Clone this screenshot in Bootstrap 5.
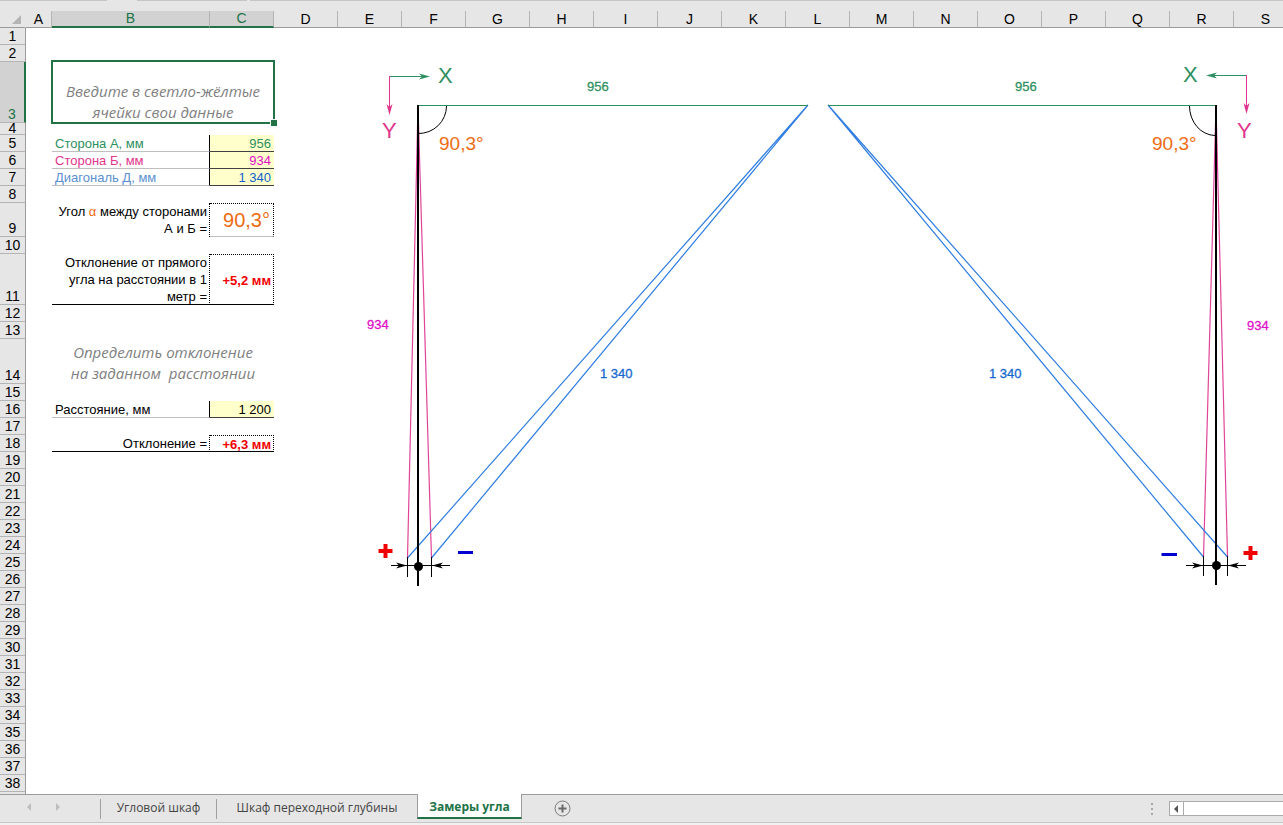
<!DOCTYPE html>
<html lang="ru">
<head>
<meta charset="utf-8">
<meta name="viewport" content="width=device-width, initial-scale=1">
<title>Замеры угла</title>
<link href="https://cdn.jsdelivr.net/npm/bootstrap@5.3.0/dist/css/bootstrap.min.css" rel="stylesheet">
<style>
  :root { --chrome: #e6e6e6; --rule: #9b9b9b; --accent: #217346; --entry: #ffffcc; }
  body { font-family: "Liberation Sans", Arial, sans-serif; font-size: 13px; line-height: 17px; color: #000; background: #fff; }
  .top-strip { height: 11px; gap: 3px; background: var(--chrome); }
  .top-strip span { height: 1px; background: #c6c6c6; }
  .top-strip .seg { width: 107px; margin-right: 27px; }
  .top-strip .seg + .seg { width: 110px; margin-right: 0; }

  /* cell grid */
  .sheet-area { min-height: 0; }
  .cells { table-layout: fixed; border-collapse: separate; border-spacing: 0; width: 1298px; }
  .cells col { width: 64px; }
  .cells col.narrow { width: 26px; }
  .cells col.wide { width: 158px; }
  .cells td, .cells th { padding: 0; height: 17px; font-weight: 400; vertical-align: bottom; }
  .cells thead th { background: var(--chrome); text-align: center; font-size: 14px; line-height: 16px; border-bottom: 1px solid var(--rule); border-right: 1px solid #b4b4b4; }
  .cells thead th.corner { text-align: right; padding-right: 4px; border-right-color: var(--chrome); }
  .cells tbody th { background: var(--chrome); text-align: center; font-size: 14px; line-height: 16px; border-bottom: 1px solid #b4b4b4; border-right: 1px solid var(--rule); }
  .cells thead th.picked { background: #d2d2d2; color: var(--accent); border-bottom: 2px solid var(--accent); line-height: 15px; }
  .cells tbody th.picked { background: #d2d2d2; color: var(--accent); border-right: 2px solid var(--accent); }
  .corner svg { display: block; margin-left: auto; margin-bottom: 3px; }
  .cells tr.r3 > * { height: 61px; }
  .cells tr.r4 > * { height: 12px; line-height: 11px; }
  .cells tr.r9 > * { height: 34px; }
  .cells tr.r11 > * { height: 51px; }
  .cells tr.r14 > * { height: 45px; }

  .hint { font-family: "Open Sans", sans-serif; font-style: italic; font-size: 15px; line-height: 21px; color: #808080; text-align: center; }
  .selection::after { content: ""; position: absolute; inset: -2px -1px -1px; border: 2px solid var(--accent); }
  .grip { position: absolute; z-index: 1; right: -3px; bottom: -3px; width: 7px; height: 7px; background: var(--accent); border: solid #fff; border-width: 1px 0 0 1px; }
  .cells .caption-cell { padding-left: 3px; border-bottom: 1px solid #bfbfbf; border-right: 1px solid #000; }
  .caption-cell label, .entry input { display: block; height: 16px; line-height: 17px; }
  .cells .entry { background: var(--entry); border-bottom: 1px solid #404040; }
  .entry input { width: 100%; border: 0; padding: 0 3px 0 0; background: transparent; color: inherit; text-align: right; }
  .cells .ask { text-align: right; padding-right: 2px; border-right: 1px dotted #000; }
  .cells .answer { text-align: right; vertical-align: middle; line-height: 15px; border: 1px dotted #000; border-width: 1px 1px 0 0; padding-right: 2px; color: #f00000; font-weight: 700; }
  .cells .answer.angle { font-size: 20px; line-height: 24px; font-weight: 400; color: #ed6c12; padding-right: 3px; border-bottom: 1px solid #bfbfbf; }
  .cells .solid-end { box-shadow: inset 0 -1px #000; }
  .tone-a { color: #2e8f61; } .tone-b { color: #e0358c; } .tone-d { color: #5b8fcf; }
  .tone-b2 { color: #e010c8; } .tone-d2 { color: #1062cc; } .tone-angle { color: #ed6c12; }

  /* drawing floats over the cells */
  .sketch { position: absolute; left: 338px; top: 45px; width: 945px; height: 560px; }
  .sketch text { font-size: 13px; }
  .sketch .axis { font-size: 22px; }
  .sketch .deg { font-size: 19px; }
  .sketch .val { stroke-width: .3px; }

  /* sheet tabs */
  .tabs-bar { height: 29px; background: var(--chrome); border-top: 1px solid var(--rule); border-bottom: 1px solid #c6c6c6; font-family: "Open Sans", sans-serif; font-size: 12px; }
  .tabs-bar a { color: #444; text-decoration: none; text-align: center; }
  .tabs-bar .tab { border-left: 1px solid #a0a0a0; height: 20px; line-height: 18px; }
  .tabs-bar .tab-1 { width: 116px; } .tabs-bar .tab-2 { width: 201px; }
  .tabs-bar .tab-now { width: 105px; height: 25px; line-height: 25px; margin-top: -1px; color: var(--accent); font-weight: 700; background: #fff; border: solid var(--rule); border-width: 0 1px; border-bottom: 2px solid var(--accent); }
  .tabs-bar button { border: 0; padding: 0; background: none; display: flex; }
  .arrows { width: 100px; padding-left: 27px; gap: 24px; }
  .hscroll { width: 114px; height: 15px; border: 1px solid #ababab; border-right: 0; background: #fff; }
  .hscroll button { width: 14px; border-right: 1px solid #ababab; align-items: center; justify-content: center; }
  .foot { height: 2px; background: #f1f1f1; }
</style>
</head>
<body class="vh-100 d-flex flex-column overflow-hidden">
<main class="sheet-area position-relative flex-fill overflow-hidden">
  <div class="top-strip d-flex"><span class="seg"></span><span class="seg"></span><span class="flex-fill"></span></div>
  <table class="cells">
    <colgroup id="widths"><col class="narrow"><col class="narrow"><col class="wide"></colgroup>
    <thead><tr id="letters"><th class="corner"><svg width="9" height="9"><path d="M9 0V9H0z" fill="#b4b4b4"/></svg></th></tr></thead>
    <tbody id="grid">
      <tr><th>1</th></tr>
      <tr><th>2</th></tr>
      <tr class="r3"><th class="picked">3</th><td></td><td colspan="2" class="hint selection position-relative">Введите в светло-жёлтые<br>ячейки свои данные<span class="grip"></span></td></tr>
      <tr class="r4"><th>4</th></tr>
      <tr><th>5</th><td></td><td class="caption-cell tone-a"><label for="sideA">Сторона А, мм</label></td><td class="entry tone-a"><input id="sideA" value="956"></td></tr>
      <tr><th>6</th><td></td><td class="caption-cell tone-b"><label for="sideB">Сторона Б, мм</label></td><td class="entry tone-b2"><input id="sideB" value="934"></td></tr>
      <tr><th>7</th><td></td><td class="caption-cell tone-d"><label for="diag">Диагональ Д, мм</label></td><td class="entry tone-d2"><input id="diag" value="1 340"></td></tr>
      <tr><th>8</th></tr>
      <tr class="r9"><th>9</th><td></td><td class="ask">Угол <span class="tone-angle">α</span> между сторонами<br>А и Б =</td><td class="answer angle">90,3°</td></tr>
      <tr><th>10</th></tr>
      <tr class="r11"><th>11</th><td></td><td class="ask solid-end">Отклонение от прямого<br>угла на расстоянии в 1<br>метр =</td><td class="answer solid-end">+5,2 мм</td></tr>
      <tr><th>12</th></tr>
      <tr><th>13</th></tr>
      <tr class="r14"><th>14</th><td></td><td colspan="2" class="hint">Определить отклонение<br>на заданном &nbsp;расстоянии</td></tr>
      <tr><th>15</th></tr>
      <tr><th>16</th><td></td><td class="caption-cell"><label for="dist">Расстояние, мм</label></td><td class="entry"><input id="dist" value="1 200"></td></tr>
      <tr><th>17</th></tr>
      <tr><th>18</th><td></td><td class="ask solid-end">Отклонение =</td><td class="answer solid-end">+6,3 мм</td></tr>
    </tbody>
  </table>

  <svg class="sketch" viewBox="338 45 945 560" fill="none">
    <defs>
      <path id="head" d="M0 0L-11 -3L-8 0L-11 3z"/>
    </defs>
    <!-- left corner -->
    <path d="M389.500 76.500H424" stroke="#2e8f61"/><use href="#head" x="430" y="76.500" fill="#2e8f61"/>
    <path d="M389.500 76V108" stroke="#e0358c"/><use href="#head" transform="translate(389.500 115) rotate(90)" fill="#e0358c"/>
    <path d="M418 106L407.500 558M418 106L431.500 558" stroke="#e0459a" stroke-width="1.200"/>
    <path d="M808 105L407.500 558M808 105L431.500 558" stroke="#2f7de1" stroke-width="1.200"/>
    <path d="M418 105.500H808" stroke="#2e8f61"/>
    <path d="M446.500 106A28 27.500 0 0 1 418 133.500" stroke="#000"/>
    <path d="M418 105V586" stroke="#000" stroke-width="2"/>
    <path d="M407.500 557V577M431.500 557V577M391 565.500H450" stroke="#000"/>
    <use href="#head" x="407" y="565.500" fill="#000"/><use href="#head" transform="translate(432 565.500) rotate(180)" fill="#000"/>
    <circle cx="418.500" cy="566.500" r="4.500" fill="#000"/>
    <path d="M378.500 551H392.500M385.500 544V558" stroke="#f00000" stroke-width="4"/>
    <path d="M458 552.500H473" stroke="#0000d0" stroke-width="3"/>
    <!-- right corner -->
    <path d="M1246.500 75.500H1212" stroke="#2e8f61"/><use href="#head" transform="translate(1206 75.500) rotate(180)" fill="#2e8f61"/>
    <path d="M1246.500 75V107" stroke="#e0358c"/><use href="#head" transform="translate(1246.500 114) rotate(90)" fill="#e0358c"/>
    <path d="M1216 106L1203.500 557M1216 106L1227.500 557" stroke="#e0459a" stroke-width="1.200"/>
    <path d="M828 105L1203.500 557M828 105L1227.500 557" stroke="#2f7de1" stroke-width="1.200"/>
    <path d="M828 105.500H1216" stroke="#2e8f61"/>
    <path d="M1189.500 106A26 29.500 0 0 0 1215 135.500" stroke="#000"/>
    <path d="M1216 105V585" stroke="#000" stroke-width="2"/>
    <path d="M1203.500 556V576M1227.500 556V576M1186 565.500H1246" stroke="#000"/>
    <use href="#head" x="1203" y="565.500" fill="#000"/><use href="#head" transform="translate(1228 565.500) rotate(180)" fill="#000"/>
    <circle cx="1216.500" cy="565.500" r="4.500" fill="#000"/>
    <path d="M1243.500 553H1257.500M1250.500 546V560" stroke="#f00000" stroke-width="4"/>
    <path d="M1161.500 554.500H1177" stroke="#0000d0" stroke-width="3"/>

    <g fill="#2e8f61"><text class="axis" x="438" y="83">X</text><text class="axis" x="1183" y="82">X</text>
      <text class="val" x="587" y="91" stroke="#2e8f61">956</text><text class="val" x="1015" y="91" stroke="#2e8f61">956</text></g>
    <g fill="#e0358c"><text class="axis" x="382" y="138">Y</text><text class="axis" x="1237" y="138">Y</text></g>
    <g fill="#ed6c12"><text class="deg" x="439" y="150">90,3°</text><text class="deg" x="1152" y="150">90,3°</text></g>
    <g fill="#e010c8"><text class="val" x="367" y="329" stroke="#e010c8">934</text><text class="val" x="1247" y="330" stroke="#e010c8">934</text></g>
    <g fill="#1468d0"><text class="val" x="600" y="378" stroke="#1468d0">1 340</text><text class="val" x="989" y="378" stroke="#1468d0">1 340</text></g>
  </svg>
</main>

<nav class="tabs-bar d-flex align-items-start flex-shrink-0">
  <div class="arrows d-flex align-self-center pb-1">
    <button type="button" aria-label="Назад"><svg width="5" height="8"><path d="M4 0V8L0 4z" fill="#bdbdbd"/></svg></button>
    <button type="button" aria-label="Вперёд"><svg width="5" height="8"><path d="M0 0V8L4 4z" fill="#bdbdbd"/></svg></button>
  </div>
  <a href="#" class="tab tab-1 mt-1">Угловой шкаф</a>
  <a href="#" class="tab tab-2 mt-1">Шкаф переходной глубины</a>
  <a href="#" class="tab-now">Замеры угла</a>
  <button type="button" class="align-self-center ms-4 ps-2" aria-label="Новый лист"><svg width="17" height="17" fill="none"><circle cx="8.500" cy="8.500" r="7.500" stroke="#7a7a7a"/><path d="M4.500 8.500H12.500M8.500 4.500V12.500" stroke="#6a6a6a" stroke-width="2"/></svg></button>
  <svg class="ms-auto me-3 align-self-center" width="2" height="12"><path d="M0 1H2M0 6H2M0 11H2" stroke="#a6a6a6" stroke-width="2"/></svg>
  <div class="hscroll d-flex align-self-center"><button type="button" class="h-100" aria-label="Прокрутить влево"><svg width="5" height="8"><path d="M4 0V8L0 4z" fill="#555"/></svg></button></div>
</nav>
<div class="foot flex-shrink-0"></div>

<script>
  const head = document.getElementById("letters");
  const widths = document.getElementById("widths");
  const grid = document.getElementById("grid");
  [..."ABCDEFGHIJKLMNOPQRS"].forEach((l, i) => {
    const th = document.createElement("th");
    th.textContent = l;
    if (l === "B" || l === "C") th.className = "picked";
    head.append(th);
    if (i > 1) widths.append(document.createElement("col"));
  });
  // rows after the last filled one; the final one stays blank under the tab bar
  for (let n = 19; n <= 39; n++) {
    const tr = document.createElement("tr");
    const th = document.createElement("th");
    th.textContent = n < 39 ? n : "";
    tr.append(th);
    grid.append(tr);
  }
</script>
<script src="https://cdn.jsdelivr.net/npm/bootstrap@5.3.0/dist/js/bootstrap.bundle.min.js"></script>
</body>
</html>
